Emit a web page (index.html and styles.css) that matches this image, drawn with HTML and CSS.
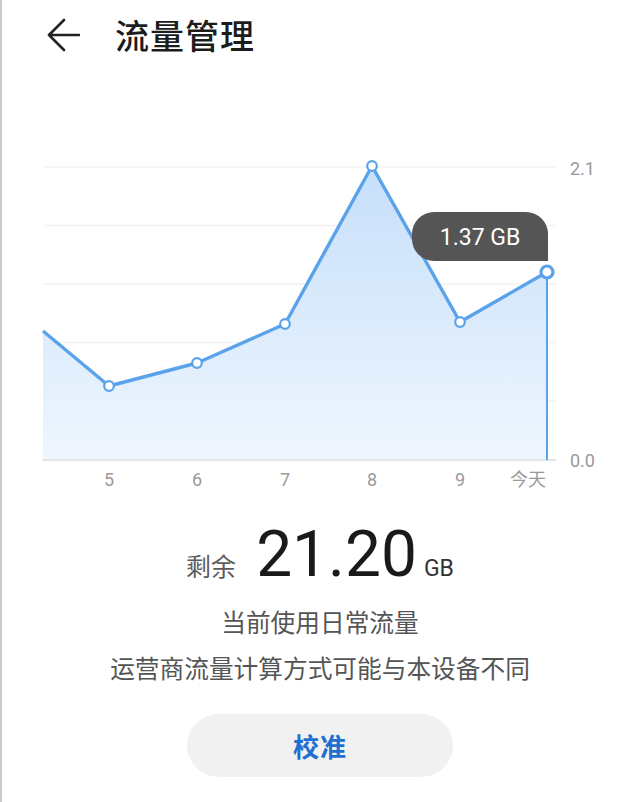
FILE: index.html
```html
<!DOCTYPE html>
<html lang="zh-CN">
<head>
<meta charset="utf-8">
<title>流量管理</title>
<link rel="stylesheet" href="styles.css">
</head>
<body>
<div class="page">
  <header class="topbar">
    <svg class="back" width="34" height="34" viewBox="46 17 34 34" aria-hidden="true">
      <path d="M79 34 H49 M64 19 L49 34 L64 49" fill="none" stroke="#222" stroke-width="2.6" stroke-linecap="round" stroke-linejoin="round"/>
    </svg>
    <h1 class="title">流量管理</h1>
  </header>

  <section class="chart">
    <svg width="640" height="360" viewBox="0 140 640 360">
      <defs>
        <linearGradient id="fillGrad" x1="0" y1="166" x2="0" y2="460" gradientUnits="userSpaceOnUse">
          <stop offset="0" stop-color="#c6dffa"/>
          <stop offset="1" stop-color="#eff6fe"/>
        </linearGradient>
      </defs>
      <g class="grid">
        <line x1="43" y1="167" x2="556" y2="167"/>
        <line x1="43" y1="225.5" x2="556" y2="225.5"/>
        <line x1="43" y1="284" x2="556" y2="284"/>
        <line x1="43" y1="342.5" x2="556" y2="342.5"/>
        <line x1="43" y1="401" x2="556" y2="401"/>
      </g>
      <path d="M43 460 L43 331 L109 386 L197 363 L285 324 L372 166 L460 322 L547 272 L547 460 Z" fill="url(#fillGrad)"/>
      <line class="baseline" x1="43" y1="460" x2="556" y2="460"/>
      <line class="today-line" x1="547" y1="272" x2="547" y2="460"/>
      <polyline class="trend" points="43,331 109,386 197,363 285,324 372,166 460,322 547,272"/>
      <g class="dots">
        <circle cx="109" cy="386" r="4.8"/>
        <circle cx="197" cy="363" r="4.8"/>
        <circle cx="285" cy="324" r="4.8"/>
        <circle cx="372" cy="166" r="4.8"/>
        <circle cx="460" cy="322" r="4.8"/>
      </g>
      <circle class="today-dot" cx="547" cy="272" r="6"/>
      <text class="axis" x="570" y="175">2.1</text>
      <text class="axis" x="570" y="467">0.0</text>
      <g class="xlabels">
        <text x="109" y="486">5</text>
        <text x="197" y="486">6</text>
        <text x="285" y="486">7</text>
        <text x="372" y="486">8</text>
        <text x="460" y="486">9</text>
        <text x="528" y="486" class="cjk">今天</text>
      </g>
      <path class="tip" d="M434 212 H526 A22 22 0 0 1 548 234 V261 H434 A22 22 0 0 1 412 239 V234 A22 22 0 0 1 434 212 Z"/>
      <text class="tip-text" x="480" y="245">1.37 GB</text>
    </svg>
  </section>

  <section class="summary">
    <div class="remain">
      <span class="remain-label">剩余</span>
      <span class="remain-value">21.20</span>
      <span class="remain-unit">GB</span>
    </div>
    <p class="note">当前使用日常流量</p>
    <p class="note second">运营商流量计算方式可能与本设备不同</p>
    <button class="calibrate" type="button">校准</button>
  </section>
</div>
</body>
</html>
```

FILE: styles.css
```css
html, body {
  margin: 0;
  padding: 0;
  background: #ffffff;
}

body {
  font-family: Roboto, "Noto Sans CJK SC", sans-serif;
}

.page {
  width: 640px;
  height: 802px;
  box-sizing: border-box;
  border-left: 2px solid #c9c9c9;
  display: flex;
  flex-direction: column;
  overflow: hidden;
}

.topbar {
  height: 70px;
  display: flex;
  align-items: center;
  padding-left: 44px;
  box-sizing: border-box;
}

.back {
  display: block;
  flex: none;
}

.title {
  margin: 0 0 0 35px;
  font-family: "Noto Sans CJK SC", sans-serif;
  font-weight: 500;
  font-size: 34px;
  line-height: 40px;
  color: #1c1c1c;
  letter-spacing: 1px;
}

.chart {
  margin-top: 70px;
  margin-left: -2px;
  height: 360px;
}

.chart svg {
  display: block;
}

.grid line {
  stroke: #f2f2f2;
  stroke-width: 1.5;
}

.baseline {
  stroke: #e2e5ea;
  stroke-width: 2;
}

.today-line {
  stroke: #5aa3ea;
  stroke-width: 2;
}

.trend {
  fill: none;
  stroke: #5aa3ea;
  stroke-width: 3.4;
  stroke-linejoin: round;
}

.dots circle {
  fill: #ffffff;
  stroke: #5aa3ea;
  stroke-width: 2.2;
}

.today-dot {
  fill: #ffffff;
  stroke: #5aa3ea;
  stroke-width: 3.2;
}

.axis {
  font-family: Roboto, sans-serif;
  font-size: 18px;
  fill: #9a9a9a;
}

.xlabels text {
  font-family: Roboto, sans-serif;
  font-size: 18px;
  fill: #9a9a9a;
  text-anchor: middle;
}

.xlabels .cjk {
  font-family: "Noto Sans CJK SC", sans-serif;
}

.tip {
  fill: #555555;
}

.tip-text {
  font-family: Roboto, sans-serif;
  font-size: 23px;
  fill: #ffffff;
  text-anchor: middle;
}

.summary {
  display: flex;
  flex-direction: column;
  align-items: center;
  margin-left: -2px;
}

.remain {
  margin-top: 18px;
  display: flex;
  align-items: baseline;
  height: 74px;
}

.remain-label {
  font-family: "Noto Sans CJK SC", sans-serif;
  font-size: 25px;
  color: #5c5c5c;
  margin-right: 20px;
}

.remain-value {
  font-family: Roboto, sans-serif;
  font-size: 64px;
  line-height: 74px;
  color: #1a1a1a;
}

.remain-unit {
  font-family: Roboto, sans-serif;
  font-size: 23px;
  color: #333333;
  margin-left: 7px;
}

.note {
  margin: 11px 0 0 0;
  font-family: "Noto Sans CJK SC", sans-serif;
  font-size: 24.7px;
  line-height: 36px;
  color: #555555;
}

.note.second {
  margin-top: 10px;
}

.calibrate {
  margin-top: 29px;
  width: 266px;
  height: 63px;
  border: none;
  border-radius: 32px;
  background: #f1f1f1;
  font-family: "Noto Sans CJK SC", sans-serif;
  font-weight: 700;
  font-size: 26px;
  color: #1f6fd1;
  letter-spacing: 1px;
  padding: 0;
}
```
